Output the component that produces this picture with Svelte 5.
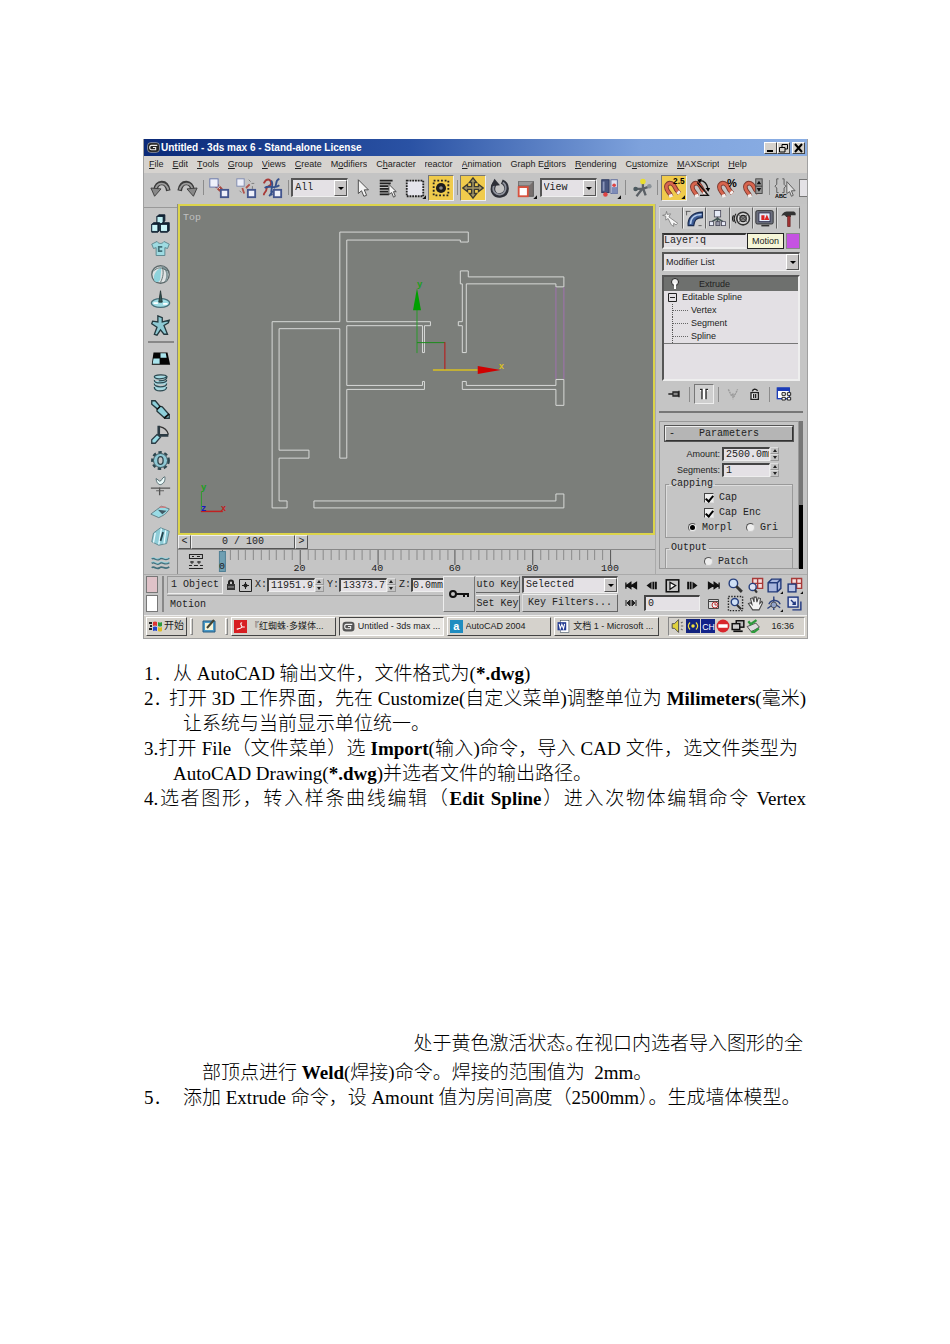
<script>
  const menus = [
    ['', 'F', 'ile'], ['', 'E', 'dit'], ['', 'T', 'ools'], ['', 'G', 'roup'], ['', 'V', 'iews'],
    ['', 'C', 'reate'], ['M', 'o', 'difiers'], ['C', 'h', 'aracter'], ['reactor', '', ''],
    ['', 'A', 'nimation'], ['Graph E', 'd', 'itors'], ['', 'R', 'endering'], ['C', 'u', 'stomize'],
    ['', 'M', 'AXScript'], ['', 'H', 'elp']
  ];

  const magnet = '<path d="M9 21C7 16 2 14 4 9C7 4 12 8 13 11C14 14 16 16 18 18" fill="none" stroke="#7c3a30" stroke-width="5"/><path d="M9 21C7 16 2 14 4 9C7 4 12 8 13 11C14 14 16 16 18 18" fill="none" stroke="#d8654e" stroke-width="3"/><path d="M8 19L9 22M16 16L18 18" stroke="#f4f0ee" stroke-width="4"/>';
  const cursor = '<path d="M8 3V18L11.500 15L14 21L17 20L14.500 14H19Z" fill="#f4f4f4" stroke="#444"/>';
  const corner = '<path d="M24 20V24H20Z" fill="#111"/>';

  const tools = [
    { n: 'Undo', s: '<path d="M6 14C7 5 18 3 20 15" fill="none" stroke="#3c3c3c" stroke-width="5"/><path d="M6 14C7 6 17 4 20 14" fill="none" stroke="#9c9c9c" stroke-width="2"/><path d="M1 12L5 21L12 13Z" fill="#888" stroke="#3c3c3c"/>' },
    { n: 'Redo', s: '<path d="M18 14C17 5 6 3 4 15" fill="none" stroke="#3c3c3c" stroke-width="5"/><path d="M18 14C17 6 7 4 4 14" fill="none" stroke="#9c9c9c" stroke-width="2"/><path d="M23 12L19 21L12 13Z" fill="#888" stroke="#3c3c3c"/>' },
    { sep: 1 },
    { n: 'Link', s: '<path d="M8 8L17 17" stroke="#a8483f" stroke-width="5" stroke-dasharray="4 1"/><path d="M9 9L16 16" stroke="#efd0cc" stroke-width="1"/><rect x="2" y="2" width="9" height="9" fill="#eef0fa" stroke="#6272a8"/><rect x="14" y="14" width="8" height="8" fill="#eef0fa" stroke="#44568e" stroke-width="2"/>' },
    { n: 'Unlink', s: '<path d="M8 12L10 18M12 12L16 8" stroke="#b0524a" stroke-width="2"/><path d="M15 3l2 2M18 7h3M5 15l2 2M19 10v3" stroke="#777"/><rect x="2" y="2" width="8" height="8" fill="#eef0fa" stroke="#7a86ae"/><rect x="14" y="14" width="8" height="8" fill="#eef0fa" stroke="#44568e" stroke-width="2"/>' },
    { n: 'Bind to Space Warp', s: '<path d="M3 7C6 1 10 2 11 6C12 11 6 9 6 13C6 17 3 16 3 20" fill="none" stroke="#a83a38" stroke-width="2"/><path d="M11 4C15 8 9 13 12 20M20 2C14 4 19 9 14 12M4 12C9 8 14 14 20 9M9 21L13 15" fill="none" stroke="#35508c" stroke-width="2"/><rect x="14" y="14" width="8" height="8" fill="#eef0fa" stroke="#44568e" stroke-width="2"/>' },
    { sep: 1 },
    { combo: 'All', n: 'Selection filter' },
    { n: 'Select Object', s: cursor },
    { n: 'Select by Name', s: '<path d="M3 4H17M3 7H15M3 10H12M3 13H15M3 16H12M3 19H13" stroke="#222" stroke-width="2"/><path d="M13 8V19L16 17L18 22L20 21L18 16H21Z" fill="#f4f4f4" stroke="#444"/>' },
    { n: 'Rectangular Selection Region', s: '<rect x="3" y="4" width="18" height="17" fill="#e4e4ec" stroke="#222" stroke-width="2" stroke-dasharray="2 1"/>' + corner },
    { n: 'Window Crossing', on: 1, s: '<rect x="4" y="4" width="16" height="16" fill="none" stroke="#222" stroke-width="2" stroke-dasharray="2 2"/><circle cx="12" cy="12" r="5.500" fill="#1c1c1c"/><circle cx="12" cy="12" r="2" fill="#8a8a8a"/>' },
    { sep: 1 },
    { n: 'Select and Move', on: 1, s: '<path d="M12 1L16 6H13.500V10.500H18V8L23 12L18 16V13.500H13.500V18H16L12 23L8 18H10.500V13.500H6V16L1 12L6 8V10.500H10.500V6H8Z" fill="#a89a68" stroke="#3c3a30" stroke-width="1.500"/>' },
    { n: 'Select and Rotate', s: '<path d="M6 7C1 17 8 21 13 20C21 18 21 8 14 5" fill="none" stroke="#2e3038" stroke-width="5"/><path d="M6 8C2 16 8 20 13 19C19 17 20 9 15 6" fill="none" stroke="#8e929c" stroke-width="2"/><path d="M2 10L6 2L12 9Z" fill="#2e3038"/>' },
    { n: 'Select and Scale', s: '<rect x="4" y="5" width="16" height="16" fill="#77706e" stroke="#555"/><path d="M4 5H20L16 9H4Z" fill="#999"/><rect x="4" y="11" width="10" height="10" fill="#fff" stroke="#d8523e" stroke-width="2"/>' + corner },
    { combo: 'View', n: 'Reference coordinate system' },
    { n: 'Use Pivot Point Center', s: '<rect x="3" y="3" width="8" height="14" fill="#48557e" stroke="#27345e"/><path d="M5 5V15" stroke="#8b96bb" stroke-width="2"/><circle cx="7" cy="19" r="2.500" fill="#d44"/><rect x="13" y="3" width="7" height="15" fill="#dfe1ee" stroke="#5a6899"/><path d="M14 11H20V18H14Z" fill="#7e8cb8"/><circle cx="16.500" cy="9" r="2" fill="#d44"/>' + corner },
    { sep: 1 },
    { n: 'Select and Manipulate', s: '<path d="M13 5V12L6 21M4 13H13L21 10M13 12L16 20" fill="none" stroke="#5b6066" stroke-width="2.500"/><circle cx="13" cy="5" r="3" fill="#e8dd30"/><circle cx="5" cy="13" r="2.500" fill="#4c5a60"/><circle cx="20" cy="10" r="2.500" fill="#8a9298"/>' },
    { sep: 1 },
    { n: 'Snap Toggle', on: 1, s: magnet + '<text x="11" y="8" font-size="9" font-weight="700" font-family="Liberation Sans">2.5</text>' + corner },
    { n: 'Angle Snap', s: magnet + '<path d="M9 6L21 20H12M12 4C17 4 20 8 21 14" fill="none" stroke="#111" stroke-width="1.500"/><path d="M9 3l5-1l-2 5zM18 12h5l-2 4z"/>' },
    { n: 'Percent Snap', s: magnet + '<text x="12" y="11" font-size="12" font-weight="700" font-family="Liberation Sans">%</text>' },
    { n: 'Spinner Snap', s: magnet + '<rect x="15" y="2" width="7" height="16" fill="#999" stroke="#444"/><path d="M15 10H22" stroke="#333"/><path d="M16 8L18.500 4L21 8ZM16 12H21L18.500 16Z" fill="#111"/>' },
    { sep: 1 },
    { n: 'Named Selection Sets', s: '<path d="M5 2H3V8L1 10L3 12V17H5M9 2H11V8L13 10L11 12V17H9" fill="none" stroke="#555"/><text x="1" y="23" font-size="6" font-weight="700" font-family="Liberation Sans">ABC</text><path d="M14 5V18L17 16L19 21L21 20L19 15H23Z" fill="#ddd" stroke="#555"/>' }
  ];

  const side = [
    { n: 'Rigid Body', s: '<g stroke="#123" stroke-width="1"><path d="M8 4L10 2H17V9L15 11H8Z" fill="#123"/><rect x="8" y="4" width="7" height="8" fill="#bff0f4"/><path d="M2 13L4 11H11V20L9 22H2Z" fill="#123"/><rect x="2" y="13" width="7" height="8" fill="#c9f4f8"/><path d="M12 13L14 11H22V20L20 22H12Z" fill="#123"/><rect x="12" y="13" width="8" height="8" fill="#c9f4f8"/></g>' },
    { n: 'Cloth', s: '<path d="M2 7L8 4C10 7 14 7 16 4L22 7L20 12L17 11V20H7V11L4 12Z" fill="#9edbe2" stroke="#568088"/><path d="M14 10H10V15H14" fill="none" stroke="#417078" stroke-width="2"/>' },
    { n: 'Soft Body', s: '<circle cx="12" cy="12" r="10" fill="#dfe3e4" stroke="#5c686a" stroke-width="1.500"/><path d="M13 4C6 7 3 14 5 19C9 23 12 19 12 15Z" fill="#8fd3dc"/><path d="M14 3C20 6 21 13 18 20" fill="none" stroke="#7f9497" stroke-width="2"/><path d="M14 4C16 9 15 15 12 21M4 8C8 4 12 4 14 5L21 8" fill="none" stroke="#566"/>' },
    { n: 'Rope', s: '<ellipse cx="12" cy="16" rx="10.500" ry="5" fill="#9fdce4" stroke="#48707a" stroke-width="1.500"/><path d="M12 2L10 15H14Z" fill="#355" stroke="#233"/><path d="M4 16H9M15 17H20" stroke="#fff" stroke-width="2"/>' },
    { n: 'Deforming Mesh', s: '<path d="M9 1L14 3L14 8L22 6L21 9L16 12L20 22L16 22L12 17L8 23L5 22L8 14L2 10L3 7L9 8Z" fill="#8ec9d3" stroke="#23383e" stroke-width="1.500"/>' },
    { sep: 1 },
    { n: 'Plane', s: '<path d="M4 5H20L23 19H2Z" fill="#050505"/><path d="M12 6H18L19 11H12ZM4 12H11V18H3Z" fill="#a9e3ec"/>' },
    { n: 'Spring', s: '<path d="M5 5H19M5 11H19M5 17H19" stroke="#a4dbe4" stroke-width="4"/><path d="M20 4C14 8 5 7 5 4C5 2 18 1 19 4C20 8 15 9 10 9M5 8C4 13 19 12 19 8M5 12C4 17 19 17 19 12M5 16C4 22 19 22 19 16" fill="none" stroke="#2c4a52" stroke-width="1.500"/>' },
    { n: 'Linear Dashpot', s: '<path d="M2 2L6 2L11 8L14 9L22 18V22L17 22L8 14V11L2 6Z" fill="#8ed0da" stroke="#23363b" stroke-width="1.500"/><path d="M8 12L12 8M16 22L22 17" stroke="#111" stroke-width="2"/>' },
    { n: 'Angular Dashpot', s: '<path d="M10 2V12L4 18M10 13H21" fill="none" stroke="#2b3b44" stroke-width="3"/><path d="M2 18L8 12L12 15L6 22H2Z" fill="#98dbe5" stroke="#2b3b44" stroke-width="1.500"/><path d="M11 3C17 4 20 8 21 12" fill="none" stroke="#333" stroke-width="1.500"/>' },
    { n: 'Motor', s: '<circle cx="12" cy="12" r="8" fill="#8fc9d5" stroke="#2c464e"/><circle cx="12" cy="12" r="9.500" fill="none" stroke="#2c464e" stroke-width="2.500" stroke-dasharray="4 3"/><ellipse cx="12" cy="12" rx="3" ry="4.500" fill="#c4c4c4" stroke="#2c464e" stroke-width="1.500"/>' },
    { n: 'Wind', s: '<path d="M1 15H23M11 14V23" stroke="#555" stroke-width="1.500"/><path d="M7 4C7 9 11 13 14 10C18 8 17 2 17 2C13 3 14 7 11 7Z" fill="#eafafa" stroke="#4a6268"/><path d="M7 18H16" stroke="#555"/>' },
    { n: 'Toy Car', s: '<path d="M1 15C6 11 9 9 13 6L22 9C19 15 14 17 10 19Z" fill="#9adbe5" stroke="#597279"/><path d="M9 10L19 11L14 15Z" fill="#415965"/><path d="M11 7L18 7" stroke="#d77" stroke-width="1.500"/>' },
    { n: 'Fracture', s: '<path d="M4 8L12 2L22 6L19 20L10 22L2 18Z" fill="#8fcdd8" stroke="#5b858e"/><path d="M13 3L10 21M6 8L4 19M18 5L16 20" stroke="#e8fbff" stroke-width="1.500"/><path d="M15 7L12 17" stroke="#24434c" stroke-width="2"/>' },
    { n: 'Water', s: '<path d="M2 8C5 5 7 11 11 8C14 5 17 11 22 7M2 13C5 10 7 16 11 13C14 10 17 16 22 12M2 18C5 15 7 21 11 18C14 15 17 21 22 17" fill="none" stroke="#416f7c" stroke-width="2"/><path d="M2 7C5 4 7 10 11 7C14 4 17 10 22 6M2 12C5 9 7 15 11 12C14 9 17 15 22 11" fill="none" stroke="#9cdde8"/>' }
  ];

  const tabs = [
    { n: 'Create', s: '<path d="M7 3L8 7L12 6L10 10L21 18L19 20L16 18V22L13 20L9 12L6 14L6 9L2 8L6 7Z" fill="#f6f6f6" stroke="#777"/>' },
    { n: 'Modify', on: 1, s: '<path d="M4 21C3 11 10 4 22 4V11C14 11 12 14 11 21Z" fill="#3c5c96" stroke="#1b2c50" stroke-width="1.500"/><path d="M7 19C7 12 12 7 21 7" fill="none" stroke="#b5cbea" stroke-width="2"/><path d="M1 3H7M2 3V8M21 21H17" stroke="#444"/>' },
    { n: 'Hierarchy', s: '<path d="M12 8V13M5 16L12 12L19 16M12 12V17" stroke="#455" fill="none" stroke-width="2"/><rect x="8" y="2" width="8" height="8" fill="#e6eaf6" stroke="#445"/><rect x="2" y="16" width="5" height="5" fill="#e6eaf6" stroke="#445"/><rect x="10" y="16" width="5" height="5" fill="#99a" stroke="#445"/><rect x="17" y="16" width="5" height="5" fill="#e6eaf6" stroke="#445"/>' },
    { n: 'Motion', s: '<circle cx="14" cy="12" r="8" fill="#d8d8d8" stroke="#333" stroke-width="2"/><circle cx="14" cy="12" r="4" fill="#888" stroke="#222" stroke-width="1.500"/><path d="M9 8L19 16M9 16L19 8" stroke="#444"/><path d="M5 6C2 10 2 14 5 18M2 8C0 11 0 13 2 16" fill="none" stroke="#222" stroke-width="1.500"/>' },
    { n: 'Display', s: '<rect x="1" y="2" width="22" height="17" rx="2" fill="#6b6f7c" stroke="#222"/><rect x="5" y="5" width="14" height="11" fill="#e6eefa" stroke="#224"/><path d="M8 14V8H12V14M12 14L15 7L18 14Z" fill="#d22"/><path d="M8 21H18" stroke="#333" stroke-width="2"/>' },
    { n: 'Utilities', s: '<path d="M3 9C5 3 9 3 12 3H19L21 5V8H15V10H9C7 7 5 8 3 9Z" fill="#333"/><rect x="11" y="9" width="3" height="13" fill="#a33" stroke="#622"/>' }
  ];

  const stackTools = [
    { n: 'Pin Stack', s: '<path d="M2 12H9M9 8V16M10 9H17V15H10M18 7V17" stroke="#222" stroke-width="2" fill="#888"/>' },
    { sep: 1 },
    { n: 'Show End Result', on: 1, s: '<path d="M6 4H18V8H15V20H9V8H6Z" fill="#fff"/><path d="M6 5H9V20M18 5H15V20" stroke="#222" stroke-width="2" fill="none"/>' },
    { sep: 1 },
    { n: 'Make Unique', s: '<path d="M5 5L10 15L12 12L14 15L19 5M12 15V20" fill="none" stroke="#999" stroke-width="2" stroke-dasharray="3 1"/>' },
    { n: 'Remove Modifier', s: '<path d="M6 10H17V20H6ZM8 8C9 4 13 4 16 7" fill="#eee" stroke="#222" stroke-width="2"/><path d="M10 12V18M13 12V18" stroke="#222" stroke-width="2"/>' },
    { sep: 1 },
    { n: 'Configure Sets', s: '<rect x="2" y="3" width="18" height="16" fill="#fff" stroke="#1b3cb8" stroke-width="2"/><path d="M2 5H20" stroke="#1b3cb8" stroke-width="5"/><path d="M9 10H14V14H9ZM17 10H22V14H17ZM9 17H14V21H9ZM17 17H22V21H17Z" fill="#fff" stroke="#222" stroke-width="1.500"/>' }
  ];

  const transport = [
    { n: 'Go to Start', s: '<path d="M3 7V17M11 7L4 12L11 17ZM20 7L12 12L20 17Z" fill="#111" stroke="#111" stroke-width="2"/>' },
    { n: 'Previous Frame', s: '<path d="M12 6L4 12L12 18Z" fill="#111"/><path d="M15 6V18M19 6V18" stroke="#111" stroke-width="3"/>' },
    { n: 'Play', s: '<rect x="2" y="3" width="20" height="19" fill="#c8c8c8" stroke="#111" stroke-width="2.500"/><path d="M8 7L17 12L8 18Z" fill="#fff" stroke="#111" stroke-width="2"/>' },
    { n: 'Next Frame', s: '<path d="M5 6V18M9 6V18" stroke="#111" stroke-width="3"/><path d="M12 6L20 12L12 18Z" fill="#111"/>' },
    { n: 'Go to End', s: '<path d="M21 7V17M13 7L20 12L13 17ZM4 7L12 12L4 17Z" fill="#111" stroke="#111" stroke-width="2"/>' }
  ];

  const lens = '<circle cx="9" cy="9" r="6" fill="#cfe0f6" stroke="#27407e" stroke-width="2"/><path d="M13 13L21 21" stroke="#333" stroke-width="4"/>';
  const cube = '<path d="M3 8L8 3H21V16L16 21H3Z" fill="#a9b6dc" stroke="#223a7a" stroke-width="2"/><path d="M3 8H16V21M16 8L21 3" fill="none" stroke="#223a7a" stroke-width="2"/>';
  const nav = [
    { n: 'Zoom', s: lens },
    { n: 'Zoom All', s: '<path d="M8 2H22V16H8ZM15 2V16M8 9H22" fill="#f5dede" stroke="#a83a38" stroke-width="2"/><circle cx="8" cy="14" r="5" fill="#dfe4f4" stroke="#27407e" stroke-width="2"/><path d="M11 18L14 22" stroke="#333" stroke-width="3"/>' },
    { n: 'Zoom Extents', s: cube + corner },
    { n: 'Zoom Extents All', s: '<path d="M8 2H22V16H8ZM15 2V16M8 9H22" fill="#f5dede" stroke="#a83a38" stroke-width="2"/><rect x="3" y="10" width="11" height="11" fill="#b8c3e4" stroke="#223a7a" stroke-width="2"/>' + corner },
    { n: 'Region Zoom', s: '<rect x="2" y="2" width="20" height="20" fill="none" stroke="#222" stroke-width="2" stroke-dasharray="2 2"/><circle cx="11" cy="10" r="5" fill="#cfe0f6" stroke="#27407e" stroke-width="2"/><path d="M14 14L20 20" stroke="#333" stroke-width="3"/>' },
    { n: 'Pan', s: '<path d="M8 21L2 12L5 11L7 13L5 5L8 4L10 10L10 3L13 3L14 10L16 4L19 5L18 12L21 9L22 11L17 21Z" fill="#f3f3f3" stroke="#444" stroke-width="1.500"/>' },
    { n: 'Arc Rotate', s: '<path d="M11 2V21M2 19L12 12L20 18M4 13C7 6 17 6 20 13" fill="none" stroke="#30447e" stroke-width="2"/><circle cx="11" cy="14" r="4" fill="#93a3c8" stroke="#333"/>' + corner },
    { n: 'Min/Max Toggle', s: '<rect x="3" y="3" width="14" height="14" fill="#dfe3f2" stroke="#1f3780" stroke-width="2"/><path d="M7 7L13 13M13 9V13H9" fill="none" stroke="#1f3780" stroke-width="2"/><path d="M21 9V21H9" fill="none" stroke="#1f3780" stroke-width="2"/>' }
  ];

  const tray = [
    '<path d="M2 8H6L13 1V23L6 16H2Z" fill="#e0d23c" stroke="#444" stroke-width="1.500"/><path d="M17 7L20 5M17 12H21M17 17L20 19" stroke="#666" stroke-width="2"/>',
    '<rect width="24" height="24" fill="#12237e"/><circle cx="12" cy="12" r="3" fill="#f2e23c"/><path d="M7 6C3 10 3 14 7 18M17 6C21 10 21 14 17 18" fill="none" stroke="#f2e23c" stroke-width="2"/>',
    '<rect width="24" height="24" fill="#12238a"/><text x="2" y="18" font-size="15" fill="#fff" font-family="Liberation Sans">CH</text>',
    '<circle cx="12" cy="12" r="11" fill="#d8262c"/><rect x="4" y="9" width="16" height="6" fill="#fff"/>',
    '<rect x="9" y="3" width="13" height="11" fill="#bbb" stroke="#111" stroke-width="2.500"/><rect x="2" y="8" width="13" height="10" fill="#ccc" stroke="#111" stroke-width="2.500"/><path d="M4 21H20" stroke="#111" stroke-width="3"/>',
    '<path d="M2 13L17 7L23 14L9 22Z" fill="#ddd" stroke="#444" stroke-width="1.500"/><path d="M4 4L8 9L18 2M9 21L13 23L22 16" fill="none" stroke="#2d9a3c" stroke-width="4"/>'
  ];

  const tasks = [
    { t: '『红蜘蛛·多媒体...', s: '<rect width="24" height="24" fill="#d71e22"/><path d="M15 5C10 5 14 11 15 13C12 17 7 16 5 17M15 13H20" fill="none" stroke="#fff" stroke-width="2"/>' },
    { t: 'Untitled - 3ds max ...', on: 1, s: '<rect x="1" y="3" width="22" height="18" rx="6" fill="#555"/><path d="M19 8H8C4 8 4 16 8 16H16V12H11" fill="none" stroke="#eee" stroke-width="2"/>' },
    { t: 'AutoCAD 2004', s: '<rect width="24" height="24" fill="#1f8cc0"/><text x="6" y="19" font-size="20" font-weight="700" fill="#fff" font-family="Liberation Sans">a</text>' },
    { t: '文档 1 - Microsoft ...', s: '<rect x="6" y="1" width="16" height="22" fill="#fff" stroke="#345"/><rect x="1" y="4" width="16" height="15" fill="#233c94"/><path d="M4 7L6 16L9 8L12 16L14 7" fill="none" stroke="#fff" stroke-width="2"/>' }
  ];

  const ticks = Array.from({ length: 51 }, (_, i) => i);
  const majors = [20, 40, 60, 80, 100];
</script>

{#snippet icon(shape, size)}
  <svg viewBox="0 0 24 24" width={size} height={size} aria-hidden="true">{@html shape}</svg>
{/snippet}

{#snippet combo(label, value)}
  <span class="combo">
    <select aria-label={label}><option>{value}</option></select>
    <span class="drop"></span>
  </span>
{/snippet}

{#snippet spinner(label, value)}
  <span class="spin">
    <input type="text" aria-label={label} {value} />
    <span class="arrows"><button aria-label="Increase {label}"></button><button class="down" aria-label="Decrease {label}"></button></span>
  </span>
{/snippet}

<main>
  <section class="window">
    <header class="title">
      <svg viewBox="0 0 24 24" width="13" height="13" aria-hidden="true"><rect x="1" y="3" width="22" height="18" rx="6" fill="#222" stroke="#ddd" /><path d="M19 8H8C4 8 4 16 8 16H16V12H11" fill="none" stroke="#eee" stroke-width="2" /></svg>
      <h1>Untitled - 3ds max 6 - Stand-alone License</h1>
      <button aria-label="Minimize"><svg width="11" height="10" viewBox="0 0 11 10"><path d="M2 8H8" stroke="#000" stroke-width="2" /></svg></button>
      <button aria-label="Restore"><svg width="11" height="10" viewBox="0 0 11 10"><path d="M4 4V1.500H9.500V6H7M1.500 4.500H7V9H1.500Z" fill="none" stroke="#000" /></svg></button>
      <button class="close" aria-label="Close"><svg width="11" height="10" viewBox="0 0 11 10"><path d="M2 1L9 9M9 1L2 9" stroke="#000" stroke-width="2" /></svg></button>
    </header>

    <nav class="menu">
      {#each menus as [a, u, b]}
        <button>{a}<u>{u}</u>{b}</button>
      {/each}
    </nav>

    <div class="toolbar">
      {#each tools as t}
        {#if t.sep}
          <i class="vsep"></i>
        {:else if t.combo}
          {@render combo(t.n, t.combo)}
        {:else}
          <button class="tool" class:on={t.on} aria-label={t.n}>{@render icon(t.s, 22)}</button>
        {/if}
      {/each}
      <i class="cut"></i>
    </div>

    <div class="work">
      <aside class="side">
        {#each side as t}
          {#if t.sep}
            <i class="hsep"></i>
          {:else}
            <button aria-label={t.n}>{@render icon(t.s, 21)}</button>
          {/if}
        {/each}
      </aside>

      <div class="center">
        <div class="viewport">
          <svg viewBox="179 207 475 327" role="img" aria-label="Top viewport">
            <text x="182" y="220" class="vp-name">Top</text>
            <g fill="none" stroke="#d8dad8">
              <path d="M271.500 322.500H339.500V232.500H468.500V242.500H460.500V240.500H346.500V322.500H430.500V326.500H424.500V353.500H422.500V326.500H346.500V386.500H422.500V382.500H424.500V390.500H346.500V459.500H339.500V329.500H278.500V451.500H308.500V459.500H278.500V502.500H286.500V509.500H271.500Z" />
              <path d="M313.500 502.500H556.500V495.500H564.500V509.500H313.500Z" />
              <path d="M460.500 271.500H468.500V277.500H564.500V287.500H556.500V284.500H466.500V353.500H462.500V326.500H458.500V322.500H462.500V284.500H460.500Z" />
              <path d="M462.500 382.500H466.500V386.500H556.500V380.500H564.500V406.500H556.500V390.500H462.500Z" />
              <path d="M556.500 288V380M564.500 288V380" stroke="#a070b0" />
            </g>
            <path d="M417 354V310" stroke="#2a9a2a" />
            <path d="M417 289L413 311H421Z" fill="#00a000" />
            <path d="M417 343.500H445" stroke="#1c8c1c" />
            <path d="M445 343V371" stroke="#c01010" />
            <path d="M433 371H478" stroke="#d8c020" stroke-width="1.500" />
            <path d="M478 367V375L501 371Z" fill="#d00000" />
            <path d="M200.500 513V493" stroke="#2f9a2f" />
            <path d="M200 513H222" stroke="#c02020" stroke-width="1.500" />
            <g class="axis">
              <text x="417" y="288" fill="#18a018">y</text>
              <text x="499" y="370" fill="#d8c020">x</text>
              <text x="200" y="492" fill="#18a018">y</text>
              <text x="200" y="513" fill="#1818c0">z</text>
              <text x="220" y="513" fill="#c02020">x</text>
            </g>
          </svg>
        </div>
        <div class="slider">
          <button>&lt;</button>
          <button class="thumb">0 / 100</button>
          <button>&gt;</button>
        </div>
        <div class="track">
          <svg viewBox="0 0 478 24" role="img" aria-label="Track bar">
            <g stroke="#222" fill="none"><rect x="11.500" y="4.500" width="13" height="4" /><path d="M11 18.500H25M11 15.500H14M16 15.500H20M22 15.500H25M14 11V14M21 11V14M12 12H16M19 12H23M14 6.500H16M19 6.500H22" /></g>
            {#each ticks as i}
              <path d="M{44 + Math.round(i * 7.78)}.5 0V{i % 10 === 0 ? 15 : 10}" stroke={i % 10 === 0 ? '#555' : '#8a8a8a'} />
            {/each}
            <rect x="41.500" y="1.500" width="6" height="20" fill="#6f9fb2" stroke="#4f7f94" />
            <text x="44" y="19" text-anchor="middle" fill="#235a78">0</text>
            {#each majors as m}
              <text x={44 + m * 3.89} y="21" text-anchor="middle">{m}</text>
            {/each}
          </svg>
        </div>
      </div>

      <aside class="panel">
        <div class="tabs">
          {#each tabs as t}
            <button class:on={t.on} aria-label={t.n}>{@render icon(t.s, 19)}</button>
          {/each}
        </div>
        <div class="name">
          <input type="text" aria-label="Object name" value="Layer:q" />
          <span class="tip">Motion</span>
          <button class="swatch" aria-label="Object color"></button>
        </div>
        <div class="modlist">{@render combo('Modifier List', 'Modifier List')}</div>
        <ul class="stack">
          <li class="sel"><svg width="12" height="12" viewBox="0 0 12 12"><circle cx="6" cy="4" r="3.500" fill="#eee" stroke="#222" /><path d="M6 5V11" stroke="#fff" stroke-width="2" /></svg>Extrude</li>
          <li class="root"><svg width="9" height="9" viewBox="0 0 9 9"><path d="M.5.5H8.500V8.500H.5ZM2 4.500H7" fill="none" stroke="#222" /></svg>Editable Spline</li>
          <li class="leaf">Vertex</li>
          <li class="leaf">Segment</li>
          <li class="leaf">Spline</li>
        </ul>
        <div class="stacktools">
          {#each stackTools as t}
            {#if t.sep}<i class="vsep"></i>{:else}<button class:on={t.on} aria-label={t.n}>{@render icon(t.s, 16)}</button>{/if}
          {/each}
        </div>
        <div class="rollwrap">
          <div class="rollup">
            <button class="rollhead"><span>-</span>Parameters</button>
            <div class="row"><span>Amount:</span>{@render spinner('Amount', '2500.0mm')}</div>
            <div class="row"><span>Segments:</span>{@render spinner('Segments', '1')}</div>
            <fieldset>
              <legend>Capping</legend>
              <label class="mid"><input type="checkbox" checked />Cap</label>
              <label class="mid"><input type="checkbox" checked />Cap Enc</label>
              <div class="radios">
                <label><input type="radio" name="cap" checked />Morpl</label>
                <label><input type="radio" name="cap" />Gri</label>
              </div>
            </fieldset>
            <fieldset class="out">
              <legend>Output</legend>
              <label class="mid"><input type="radio" name="out" />Patch</label>
            </fieldset>
          </div>
          <i class="scroll"></i>
        </div>
      </aside>
    </div>

    <div class="status">
      <div class="chips"><i class="pink"></i><i></i></div>
      <div class="info">
        <div class="coords">
          <span class="count">1 Object</span>
          <button aria-label="Selection lock"><svg width="10" height="12" viewBox="0 0 10 12"><path d="M3 5V3C3 1 7 1 7 3V5" fill="none" stroke="#222" stroke-width="2" /><path d="M1 5H9V11H1Z" fill="#333" /><path d="M2 8H8" stroke="#aaa" /></svg></button>
          <button aria-label="Absolute mode"><svg width="13" height="13" viewBox="0 0 13 13"><path d="M.5.5H12.500V12.500H.5Z" fill="none" stroke="#222" /><path d="M6.500 3V10M3 6.500H10" stroke="#222" /><circle cx="6.500" cy="6.500" r="2" fill="#222" /></svg></button>
          <span class="coord">X:{@render spinner('X', '11951.93')}</span>
          <span class="coord">Y:{@render spinner('Y', '13373.77')}</span>
          <span class="coord z">Z:<input type="text" aria-label="Z" value="0.0mm" /></span>
        </div>
        <div class="prompt">Motion</div>
      </div>
      <button class="key" aria-label="Set Keys"><svg width="22" height="12" viewBox="0 0 22 12"><circle cx="5" cy="6" r="3" fill="none" stroke="#111" stroke-width="2" /><path d="M8 6H21M16 6V9M20 6V9" stroke="#111" stroke-width="2" /></svg></button>
      <div class="pair"><button>uto Key</button><button>Set Key</button></div>
      <div class="filters">{@render combo('Key set', 'Selected')}<button>Key Filters...</button></div>
      <div class="play">
        <div>{#each transport as t}<button aria-label={t.n}>{@render icon(t.s, 15)}</button>{/each}</div>
        <div>
          <button aria-label="Key Mode"><svg width="12" height="10" viewBox="0 0 12 10"><path d="M1 2V8M11 2V8M5 2L2 5L5 8ZM7 2L10 5L7 8Z" fill="#222" stroke="#222" /></svg></button>
          <input type="text" aria-label="Current frame" value="0" />
          <button aria-label="Time Configuration"><svg width="13" height="13" viewBox="0 0 13 13"><path d="M1.500 2.500H11.500V11.500H1.500ZM1 4.500H12" fill="#ddd" stroke="#444" /><circle cx="8" cy="8" r="3" fill="#eee" stroke="#b33" /><path d="M8 6V8H10" fill="none" stroke="#b33" /></svg></button>
        </div>
      </div>
      <div class="nav">
        {#each nav as t}<button aria-label={t.n}>{@render icon(t.s, 17)}</button>{/each}
      </div>
    </div>

    <footer class="taskbar">
      <button class="start"><svg width="14" height="12" viewBox="0 0 14 12"><path d="M4 2Q6 1 8 2V6Q6 5 4 6Z" fill="#d33" /><path d="M9 2Q11 3 13 2V6Q11 7 9 6Z" fill="#2a9a3a" /><path d="M4 7Q6 6 8 7V11Q6 10 4 11Z" fill="#24c" /><path d="M9 7Q11 8 13 7V11Q11 12 9 11Z" fill="#db2" /><path d="M0 3H3M1 6H3M0 9H3" stroke="#222" stroke-width="2" /></svg>开始</button>
      <i class="grip"></i>
      <button class="quick" aria-label="Show Desktop"><svg width="14" height="14" viewBox="0 0 14 14"><path d="M1 2H13V13H1Z" fill="#4a9ac8" stroke="#265a80" /><path d="M3 4H11V11H3Z" fill="#f6f2d8" /><path d="M5 9L12 1" stroke="#443" stroke-width="2" /></svg></button>
      <i class="grip"></i>
      {#each tasks as t}
        <button class="task" class:on={t.on}>{@render icon(t.s, 13)}<span>{t.t}</span></button>
      {/each}
      <div class="tray">
        {#each tray as s}{@render icon(s, 14)}{/each}
        <time>16:36</time>
      </div>
    </footer>
  </section>

  <article>
    <p><span class="num wide">1．</span>从 AutoCAD 输出文件，文件格式为(<b>*.dwg</b>)</p>
    <p class="full"><span class="num half">2．</span>打开 3D 工作界面，先在 Customize(自定义菜单)调整单位为 <b>Milimeters</b>(毫米)</p>
    <p class="in2">让系统与当前显示单位统一。</p>
    <p class="full short">3.打开 File（文件菜单）选 <b>Import</b>(输入)命令，导入 CAD 文件，选文件类型为</p>
    <p class="in1">AutoCAD Drawing(<b>*.dwg</b>)并选者文件的输出路径。</p>
    <p class="full">4.选者图形，转入样条曲线编辑（<b>Edit Spline</b>）进入次物体编辑命令 Vertex</p>
    <p class="resume">处于黄色激活状态<span class="half">。</span>在视口内选者导入图形的全</p>
    <p class="in3">部顶点进行 <b>Weld</b>(焊接)命令。焊接的范围值为&nbsp; 2mm。</p>
    <p><span class="num step">5．</span>添加 Extrude 命令，设 Amount 值为房间高度（2500mm）。生成墙体模型。</p>
  </article>
</main>

<style>
  :global(body) { background: #fff; }
  main { padding: 139px 142px 60px 143px; color: #000; }
  main, main * { box-sizing: border-box; }
  button, input, select { font: inherit; color: inherit; margin: 0; padding: 0; border: 0; border-radius: 0; background: none; min-width: 0; outline: 0; }
  button { display: flex; align-items: center; justify-content: center; white-space: nowrap; overflow: hidden; }
  svg { flex: none; display: block; }
  i { display: block; }

  .window { background: #c5c5c5; border: solid #a0a0a0; border-width: 0 1px; font: 10px/12px "Liberation Mono", "Noto Sans CJK SC", monospace; overflow: hidden; color: #222; }

  .title { display: flex; align-items: center; height: 17px; padding: 0 2px 0 3px; background: linear-gradient(90deg, #0b2a78, #2a52a4 40%, #7ea2dc 75%, #8aaee4); color: #fff; font-family: "Liberation Sans", sans-serif; }
  .title h1 { flex: 1; margin: 0 0 0 1px; font-size: 10px; font-weight: 700; white-space: nowrap; }
  .title button { width: 13px; height: 12px; background: #d6d2cc; border: 1px solid; border-color: #fff #444 #444 #fff; }
  .title .close { margin-left: 2px; }

  .menu { display: flex; justify-content: space-between; height: 17px; padding: 0 60px 0 5px; background: #d6d3cf; font: 9px/15px "Liberation Sans", sans-serif; }

  .toolbar { display: flex; align-items: center; justify-content: space-between; height: 31px; padding: 0 0 2px 4px; background: #c4c4c4; }
  .tool { width: 26px; height: 26px; }
  .on { background: #f0cb4c; border: 1px solid; border-color: #777 #eee #eee #777; }
  .vsep { width: 1px; height: 15px; margin: 0 2px; background: #8c8c8c; }
  .cut { width: 8px; height: 18px; background: #e4e2e6; border: 1px solid #777; border-right: 0; }

  .combo { display: flex; height: 19px; background: #e4e1e5; border: 1px solid; border-color: #555 #eee #eee #555; border-width: 2px 1px 1px 2px; }
  .combo select { appearance: none; flex: 1; padding: 0 2px; }
  .drop { display: flex; align-items: center; justify-content: center; width: 13px; background: #c9c7c7; border: 1px solid; border-color: #fff #555 #555 #fff; pointer-events: none; }
  .drop::after { content: ""; border: 3px solid transparent; border-top: 3px solid #000; border-bottom: 0; }
  .toolbar .combo { width: 57px; }

  .work { display: grid; grid-template-columns: 34px 1fr 152px; height: 370px; }

  .side { display: flex; flex-direction: column; justify-content: space-between; align-items: center; padding: 7px 2px 0; border-right: 1px solid #8a8a8a; box-shadow: inset 0 3px #c5c5c5, inset 0 4px #999; }
  .side button { width: 26px; height: 24px; }
  .hsep { width: 26px; height: 2px; margin: 2px 0; background: #888; }

  .center { display: flex; flex-direction: column; min-width: 0; }
  .viewport { flex: 1; min-height: 0; border: 2px solid #dcd44a; background: #7b7e7a; }
  .viewport svg { width: 100%; height: 100%; }
  .vp-name { fill: #c0c0c0; font-size: 10px; }
  .axis { font: 700 9px "Liberation Mono", monospace; }
  .slider { display: flex; height: 15px; border-bottom: 1px solid #888; }
  .slider button { width: 13px; border: 1px solid; border-color: #eee #555 #555 #eee; }
  .slider .thumb { width: 104px; }
  .track { height: 24px; }
  .track svg { width: 100%; height: 24px; }
  .track text { font-size: 10px; fill: #222; }

  .panel { padding: 2px 4px 0 3px; border-left: 1px solid #aaa; min-width: 0; }
  .tabs { display: flex; height: 23px; margin: 0 3px 4px 0; border-top: 1px solid #999; }
  .tabs button { flex: 1; border: 1px solid; border-color: #ddd #666 #c5c5c5 #ddd; }
  .tabs .on { background: #cfcfcf; border-color: #eee #666 #cfcfcf #eee; }
  .name { display: flex; height: 16px; margin: 0 3px 3px; }
  .name input { flex: 1; background: #e4e1e5; border: 2px solid; border-color: #333 #e4e1e5 #eee #555; }
  .tip { padding: 0 4px; border: 1px solid #222; background: #f6f6d8; font: 9px/14px "Liberation Sans", sans-serif; }
  .swatch { width: 14px; margin-left: 2px; background: #c552e2; border: 1px solid #888; }
  .modlist { margin: 0 3px 4px; font-family: "Liberation Sans", sans-serif; font-size: 9px; }
  .stack { height: 106px; margin: 0 3px; padding: 0; list-style: none; background: #e3e0e4; border: 2px solid; border-color: #555 #eee #eee #555; font: 9px/13px "Liberation Sans", sans-serif; }
  .stack li { display: flex; align-items: center; height: 13px; padding-left: 4px; }
  .stack .sel { height: 14px; gap: 18px; background: #6e706e; padding-left: 5px; }
  .root { gap: 5px; }
  .leaf { gap: 3px; }
  .leaf::before { content: ""; width: 15px; height: 13px; margin-left: 4px; border-left: 1px dotted #555; background: linear-gradient(90deg, #666 50%, transparent 50%) 0 6px / 2px 1px repeat-x; }
  .stack li:last-child { height: 14px; border-bottom: 1px solid #777; }
  .stacktools { display: flex; align-items: center; justify-content: space-between; height: 26px; padding: 0 9px 0 6px; }
  .stacktools button { width: 20px; height: 20px; }
  .stacktools .on { background: #cfcfcf; }
  .rollwrap { display: flex; align-items: flex-start; height: 161px; padding-top: 8px; border-top: 2px solid #777; margin-top: 4px; overflow: hidden; }
  .rollup { flex: 1; min-width: 0; height: 148px; padding: 4px 5px 0; border: 1px solid #999; overflow: hidden; }
  .rollhead { position: relative; width: 100%; height: 15px; margin-bottom: 5px; background: #b5b5b5; border: 1px solid; border-color: #eee #333 #333 #eee; outline: 1px solid #555; }
  .rollhead span { position: absolute; left: 3px; }
  .scroll { width: 4px; height: 148px; background: linear-gradient(#777 57%, #000 57%); }
  .row { display: flex; justify-content: flex-end; align-items: center; gap: 2px; height: 16px; padding-right: 14px; }
  .row > span:first-child { font: 9px/14px "Liberation Sans", sans-serif; }
  .spin { display: flex; height: 14px; }
  .spin input, .z input, .play input { width: 48px; background: #e4e1e5; border: 1px solid; border-color: #444 #eee #eee #444; padding-left: 2px; border-width: 2px 1px 1px 2px; }
  .arrows { display: flex; flex-direction: column; width: 9px; }
  .arrows button { flex: 1; border: 1px solid; border-color: #ddd #999 #999 #ddd; }
  .arrows button::after { content: ""; border: 2px solid transparent; border-bottom: 3px solid #222; border-top: 0; }
  .arrows .down::after { border-top: 3px solid #222; border-bottom: 0; }
  fieldset { margin: 0; padding: 0; border: 1px solid #999; box-shadow: inset 1px 1px #ddd; min-width: 0; }
  .out { margin-top: 4px; }
  legend { margin-left: 3px; padding: 0 2px; line-height: 12px; }
  label { display: flex; align-items: center; gap: 5px; height: 15px; white-space: nowrap; }
  .mid { padding-left: 38px; }
  .radios { display: flex; gap: 14px; padding-left: 22px; height: 17px; }
  input[type="checkbox"] { appearance: none; width: 10px; height: 10px; background: #eee; border: 1px solid; border-color: #444 #ddd #ddd #444; display: grid; place-items: center; }
  input[type="checkbox"]:checked::after { content: ""; width: 3px; height: 6px; border: solid #000; border-width: 0 2px 2px 0; rotate: 40deg; }
  input[type="radio"] { appearance: none; width: 9px; height: 9px; border-radius: 50%; background: #eee; border: 1px solid; border-color: #555 #ccc #ccc #555; display: grid; place-items: center; }
  input[type="radio"]:checked::after { content: ""; width: 5px; height: 5px; border-radius: 50%; background: #000; }

  .status { display: flex; height: 41px; padding: 1px 3px 3px 2px; border-top: 1px solid #aaa; }
  .chips { display: flex; flex-direction: column; gap: 2px; width: 18px; padding-right: 4px; border-right: 2px solid #888; }
  .chips i { flex: 1; background: #fff; border: 1px solid #777; }
  .chips .pink { background: #dfc2c8; }
  .info { flex: 1; min-width: 0; padding-left: 3px; }
  .coords { display: flex; align-items: center; justify-content: space-between; height: 18px; overflow: hidden; }
  .count { width: 56px; line-height: 16px; padding-left: 3px; border: 1px solid; border-color: #999 #eee #eee #999; }
  .coord { display: flex; align-items: center; }
  .z input { width: 32px; height: 14px; padding-left: 0; border-right: 0; }
  .prompt { height: 18px; margin-top: 1px; padding-left: 3px; line-height: 18px; border-top: 1px solid #999; }
  .key { width: 32px; border: 1px solid; border-color: #eee #777 #777 #eee; }
  .pair { display: flex; flex-direction: column; gap: 2px; width: 45px; padding-left: 1px; }
  .pair button, .filters button { flex: 1; border: 1px solid; border-color: #eee #666 #666 #ddd; }
  .pair button { border-width: 1px 1px 1px 0; }
  .filters { display: flex; flex-direction: column; gap: 1px; width: 100px; padding: 0 2px; }
  .filters .combo { height: 17px; }
  .play { display: flex; flex-direction: column; width: 102px; padding-left: 2px; }
  .play div { display: flex; flex: 1; align-items: center; justify-content: space-between; }
  .play input { width: 56px; height: 16px; }
  .play button { width: 18px; }
  .nav { display: grid; grid-template-columns: repeat(4, 1fr); width: 82px; padding-left: 4px; }

  .taskbar { display: flex; align-items: center; gap: 3px; height: 24px; padding: 0 2px 2px; border-top: 1px solid #eee; border-bottom: 1px solid #a0a0a0; background: #d5d2cc; font: 9px/12px "Liberation Sans", "Noto Sans CJK SC", sans-serif; }
  .start, .task { height: 19px; border: 1px solid; border-color: #fff #444 #444 #fff; }
  .start { width: 41px; gap: 1px; font-size: 10px; }
  .grip { width: 3px; height: 17px; border: 1px solid; border-color: #fff #888 #888 #fff; }
  .quick { width: 26px; }
  .task { flex: 1; justify-content: flex-start; gap: 3px; padding: 0 2px; }
  .task.on { background: #e8e6e2; border-color: #444 #fff #fff #444; }
  .task span { overflow: hidden; }
  .tray { display: flex; align-items: center; gap: 1px; width: 137px; height: 19px; margin-left: 6px; padding: 0 10px 0 2px; border: 1px solid; border-color: #888 #fff #fff #888; }
  .tray time { margin-left: auto; }

  article { margin-top: 22px; padding: 0 2px 0 1px; font: 300 19px/25px "Liberation Serif", "Noto Sans CJK SC", serif; }
  b { font-weight: 700; }
  p { margin: 0; white-space: nowrap; }
  .full { text-align: justify; text-align-last: justify; }
  .short { padding-right: 8px; }
  .num { display: inline-block; width: 25px; text-align-last: left; }
  .wide { width: 29px; }
  .step { width: 39px; }
  .half { font-feature-settings: "halt"; }
  .in1 { padding-left: 29px; }
  .in2 { padding-left: 39px; }
  .in3 { padding-left: 58px; }
  .resume { margin-top: 220px; margin-bottom: 4px; padding-right: 3px; text-align: right; }
</style>
